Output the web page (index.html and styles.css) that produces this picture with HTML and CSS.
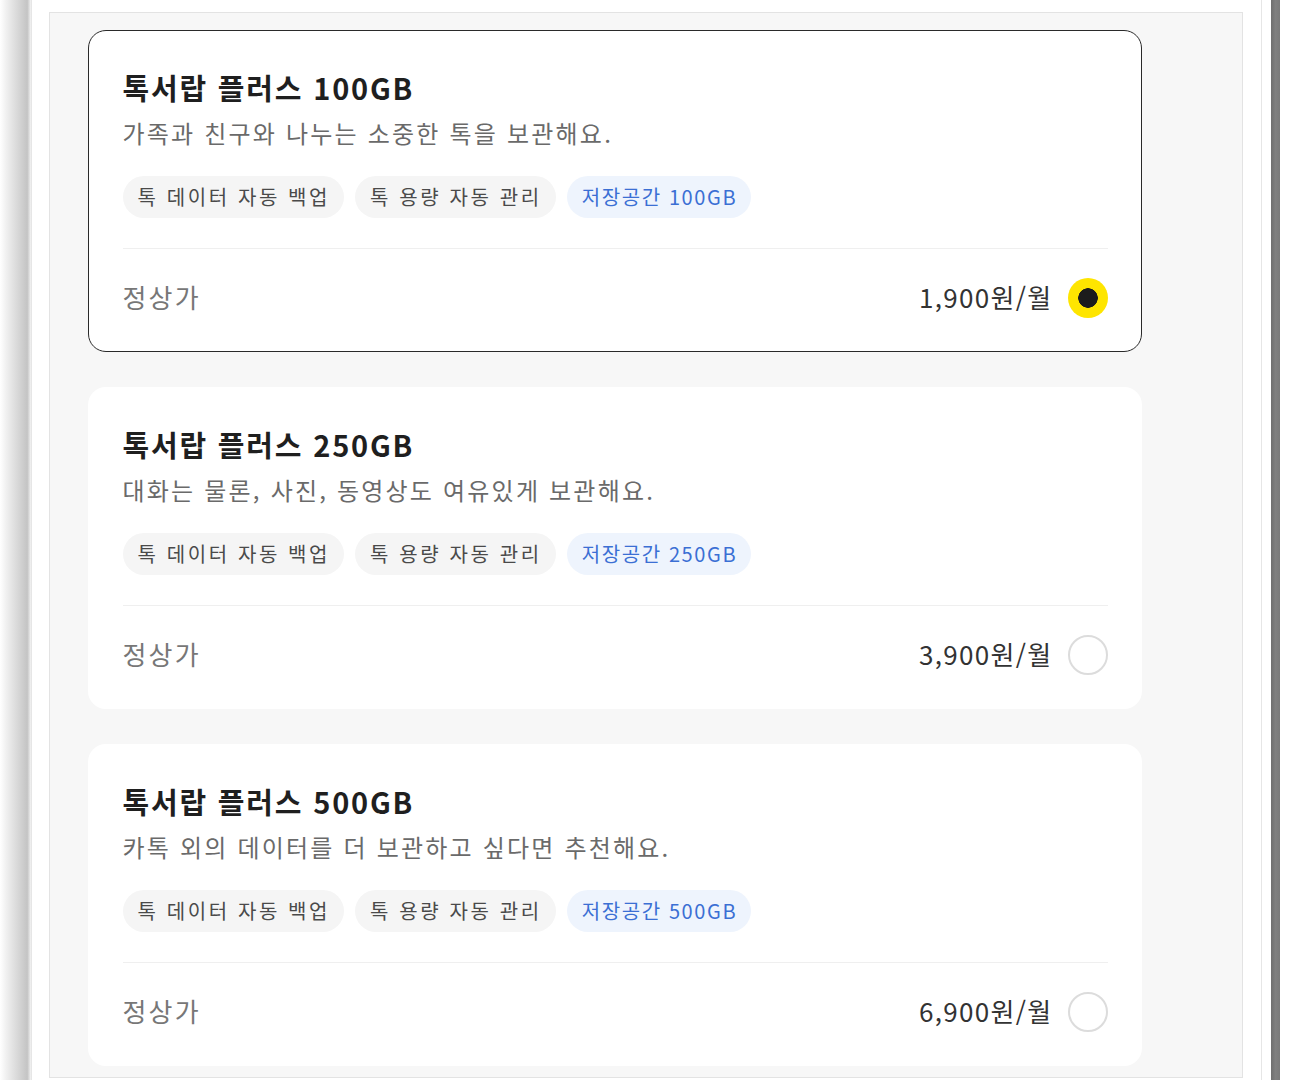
FILE: index.html
```html
<!DOCTYPE html>
<html lang="ko">
<head>
<meta charset="utf-8">
<link rel="stylesheet" href="styles.css">
</head>
<body>
<div class="screen">
  <div class="edge-left"></div>
  <div class="window">
    <div class="panel">
      <div class="card selected">
        <h2 class="title">톡서랍 플러스 100GB</h2>
        <p class="desc">가족과 친구와 나누는 소중한 톡을 보관해요.</p>
        <ul class="tags">
          <li class="tag">톡 데이터 자동 백업</li>
          <li class="tag">톡 용량 자동 관리</li>
          <li class="tag blue">저장공간 100GB</li>
        </ul>
        <div class="price-row">
          <span class="label">정상가</span>
          <span class="price">1,900원/월</span>
          <span class="radio on"></span>
        </div>
      </div>
      <div class="card">
        <h2 class="title">톡서랍 플러스 250GB</h2>
        <p class="desc">대화는 물론, 사진, 동영상도 여유있게 보관해요.</p>
        <ul class="tags">
          <li class="tag">톡 데이터 자동 백업</li>
          <li class="tag">톡 용량 자동 관리</li>
          <li class="tag blue">저장공간 250GB</li>
        </ul>
        <div class="price-row">
          <span class="label">정상가</span>
          <span class="price">3,900원/월</span>
          <span class="radio"></span>
        </div>
      </div>
      <div class="card">
        <h2 class="title">톡서랍 플러스 500GB</h2>
        <p class="desc">카톡 외의 데이터를 더 보관하고 싶다면 추천해요.</p>
        <ul class="tags">
          <li class="tag">톡 데이터 자동 백업</li>
          <li class="tag">톡 용량 자동 관리</li>
          <li class="tag blue">저장공간 500GB</li>
        </ul>
        <div class="price-row">
          <span class="label">정상가</span>
          <span class="price">6,900원/월</span>
          <span class="radio"></span>
        </div>
      </div>
    </div>
  </div>
  <div class="edge-right">
    <div class="bar"></div>
  </div>
</div>
</body>
</html>
```
FILE: styles.css
```css
* { box-sizing: border-box; }
html, body { margin: 0; padding: 0; background: #fff; }
body {
  font-family: "Noto Sans CJK KR", "Noto Sans", sans-serif;
  color: #222;
  overflow: hidden;
}
.screen {
  display: flex;
  width: 1290px;
  height: 1080px;
  overflow: hidden;
}
.edge-left {
  width: 31px;
  flex: none;
  background: linear-gradient(to right, #ffffff 0%, #f0f0f0 20%, #d6d6d6 60%, #c4c4c4 88%, #f4f4f4 100%);
}
.window {
  flex: none;
  width: 1231px;
  border-left: 1px solid #e6e6e6;
  border-right: 1px solid #e6e6e6;
  padding: 12px 18px 0 17px;
  background: #fff;
}
.panel {
  background: #f7f7f7;
  border: 1px solid #e3e3e3;
  height: 1066px;
  padding: 17px 0 0 38px;
  display: flex;
  flex-direction: column;
  gap: 35px;
}
.card {
  width: 1054px;
  background: #fff;
  border: 1.5px solid transparent;
  border-radius: 18px;
  padding: 37px 33.5px 34px;
}
.card.selected { border-color: #2a2a2a; }
.title {
  margin: 0;
  font-size: 29px;
  line-height: 38px;
  font-weight: 700;
  letter-spacing: 1.8px;
  color: #1f1f1f;
}
.desc {
  margin: 12px 0 0;
  font-size: 24px;
  line-height: 30px;
  letter-spacing: 2.2px;
  color: #6a6a6a;
}
.tags {
  list-style: none;
  margin: 28px 0 0;
  padding: 0 0 30px;
  display: flex;
  gap: 11px;
  border-bottom: 1px solid #efefef;
}
.tag {
  height: 42px;
  line-height: 42px;
  padding: 0 14px 0 15px;
  border-radius: 21px;
  background: #f5f5f5;
  color: #4a4a4a;
  font-size: 20px;
  letter-spacing: 2.6px;
}
.tag.blue {
  background: #eef4fd;
  color: #3b6fd4;
  letter-spacing: 1.6px;
}
.price-row {
  display: flex;
  align-items: center;
  height: 40px;
  margin-top: 28px;
}
.label {
  font-size: 26px;
  line-height: 34px;
  color: #777;
  letter-spacing: 2.2px;
  flex: 1;
}
.price {
  font-size: 26px;
  line-height: 34px;
  color: #333;
  letter-spacing: 1.3px;
  margin-right: 15px;
}
.radio {
  width: 40px;
  height: 40px;
  border-radius: 50%;
  border: 2px solid #dcdcdc;
  background: #fff;
  flex: none;
  margin-top: 1px;
}
.radio.on {
  border: none;
  background: radial-gradient(circle, #1c1c1c 0 9.5px, #fee500 10px);
}
.edge-right {
  flex: 1;
  display: flex;
  padding-left: 9px;
}
.bar {
  width: 9px;
  background: linear-gradient(to right, #6f6f6f, #808080 50%, #7a7a7a);
}
```
